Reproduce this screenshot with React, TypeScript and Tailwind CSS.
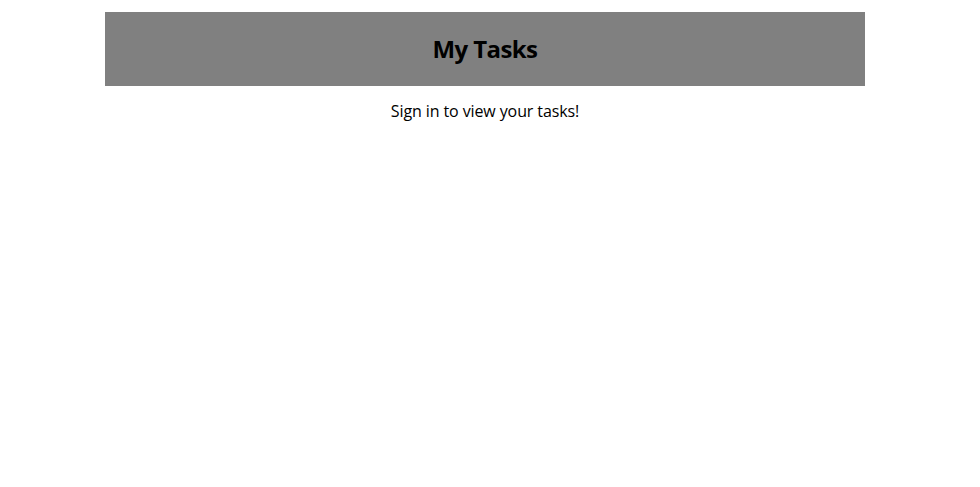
export default function App() {
  return (
    <div className="min-h-[487px] bg-white pr-[10px] pt-3 font-['Open_Sans',sans-serif] text-black">
      <div className="mx-auto w-[760px]">
        <header className="flex h-[74px] items-center justify-center bg-[#808080]">
          <h1 className="text-[24px] font-bold tracking-[-0.6px]">My Tasks</h1>
        </header>
        <p className="mt-[13px] text-center text-[16px] leading-6 tracking-[-0.1px]">Sign in to view your tasks!</p>
      </div>
    </div>
  );
}
